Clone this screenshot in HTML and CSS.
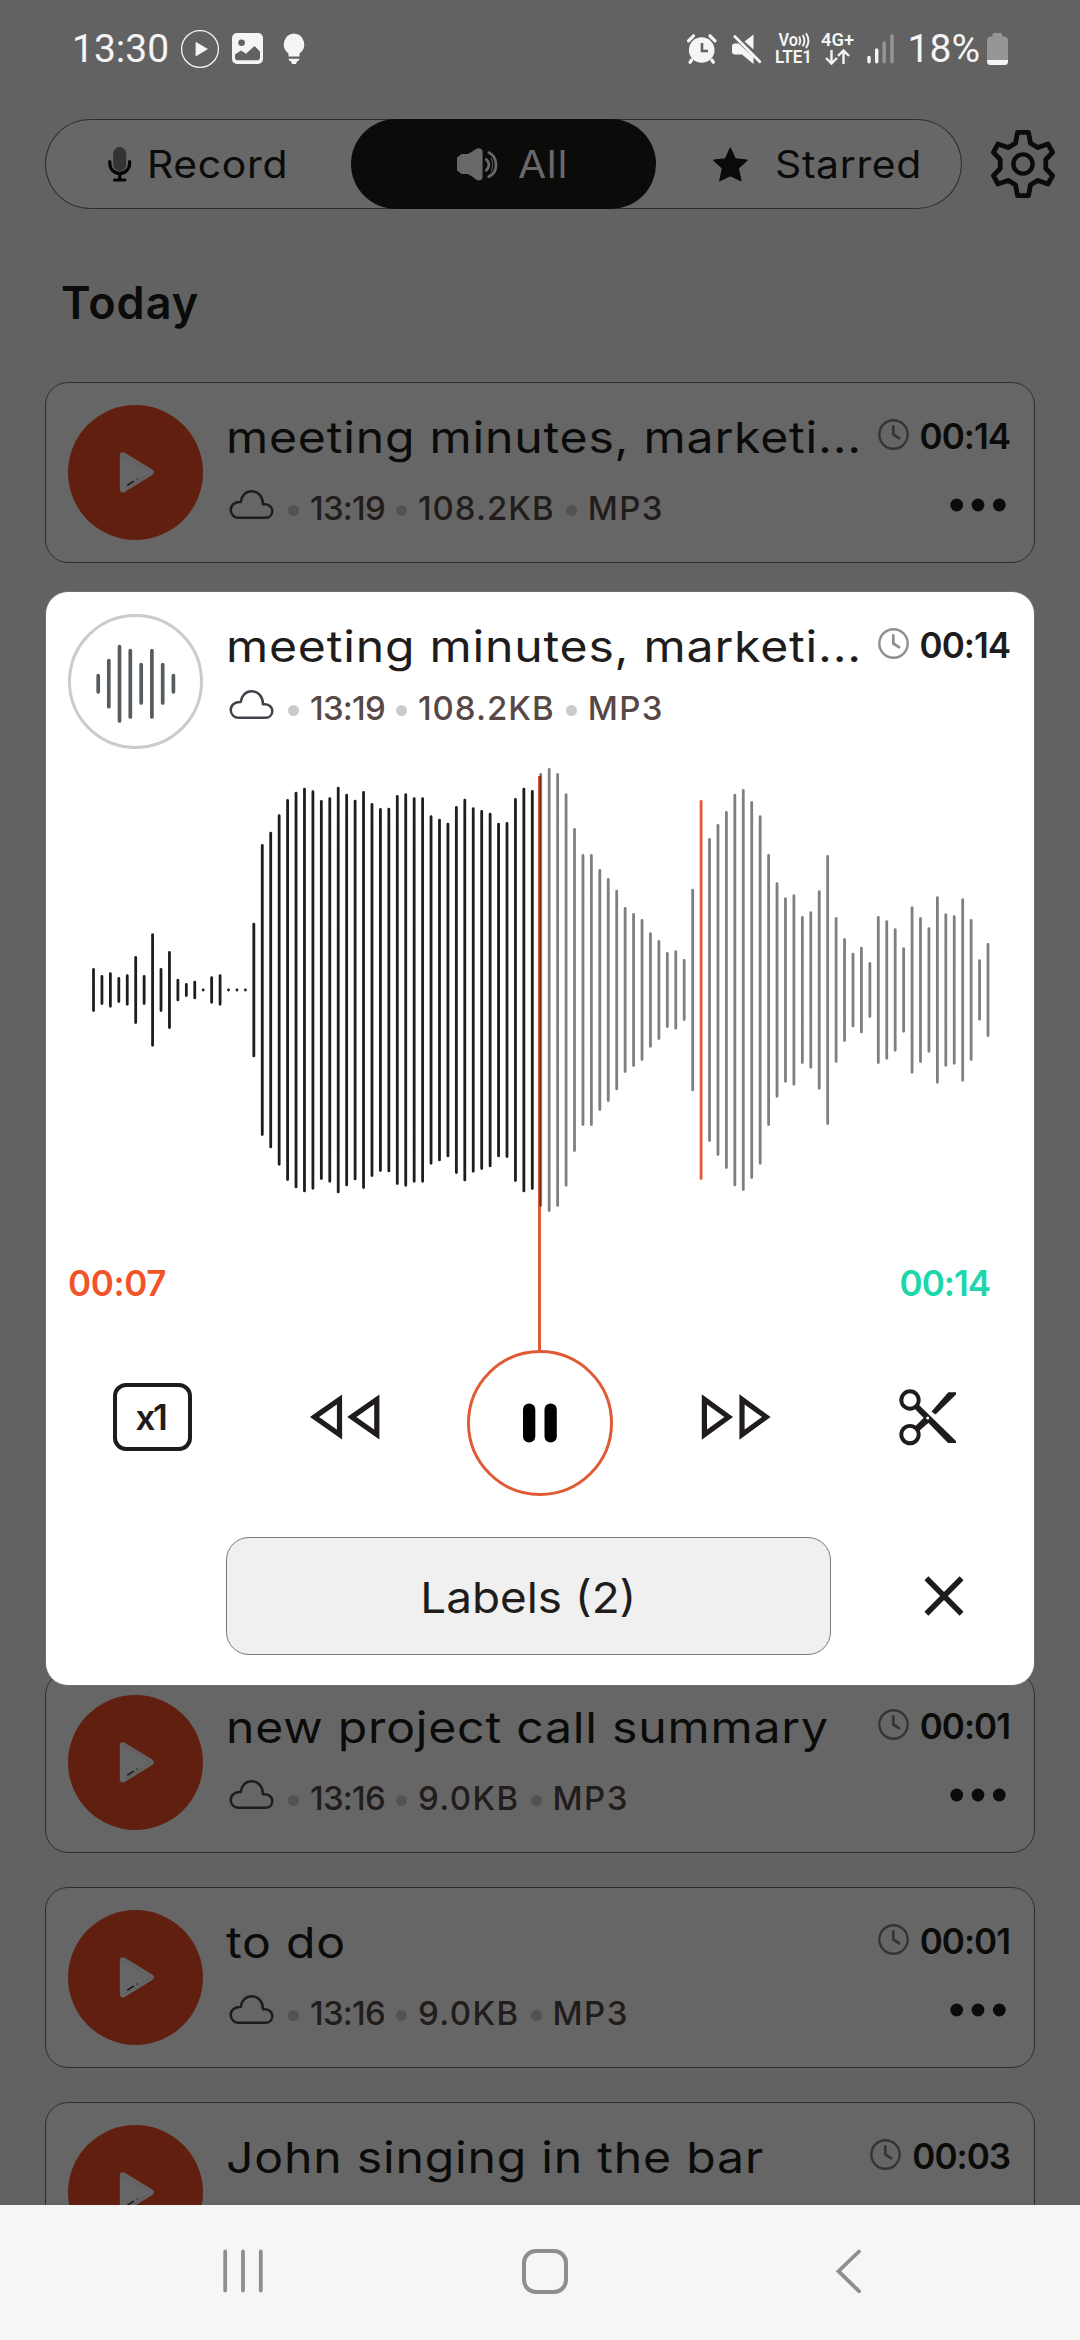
FILE: index.html
```html
<!DOCTYPE html>
<html lang="en">
<head>
<meta charset="utf-8">
<title>Recordings</title>
<link rel="stylesheet" href="styles.css">
</head>
<body>
<svg class="defs" width="0" height="0">
  <symbol id="cloud" viewBox="0 0 51 44">
    <path d="M12.6 31.8A7.9 7.9 0 0 1 4.7 24C4.7 19.2 9 15.6 14.7 16C15.6 9.5 20 5.2 25.4 5.2C32 5.2 37.2 10.6 36.9 18.3C42.2 17.4 46.3 20.6 46.3 25C46.3 29 43.4 31.8 39.5 31.8Z" fill="none" stroke="currentColor" stroke-width="2.5" stroke-linejoin="round"/>
  </symbol>
  <symbol id="clock" viewBox="0 0 31 31">
    <circle cx="15.5" cy="15.5" r="14.2" fill="none" stroke="currentColor" stroke-width="2.4"/>
    <path d="M15.3 7.5V15.5L21 19.2" fill="none" stroke="currentColor" stroke-width="2.8" stroke-linecap="round" stroke-linejoin="round"/>
  </symbol>
  <symbol id="play" viewBox="0 0 135 135">
    <path d="M55 50.5L82.5 67.3L55 84.2Z" fill="#666" stroke="#666" stroke-width="6.4" stroke-linejoin="round"/>
    <path d="M54.8 51.5Q55 50 56.8 51L81.5 66Q83.3 67.3 81.5 68.6L56.8 83.6" fill="none" stroke="#585858" stroke-width=".8"/>
    <path d="M59.3 80.2L65.8 76M68.6 74.3L69.4 73.8" fill="none" stroke="#080808" stroke-width="1.3"/>
  </symbol>
  <symbol id="more" viewBox="0 0 60 38">
    <circle cx="6.7" cy="19" r="6.4"/><circle cx="28" cy="19" r="6.4"/><circle cx="49.3" cy="19" r="6.4"/>
  </symbol>
</svg>

<div class="screen">
  <header class="status">
    <div class="status-left">
      <span class="status-text">13:30</span>
      <svg class="s-play" width="40" height="40"><circle cx="20" cy="20" r="18.4" fill="none" stroke="#f5f5f5" stroke-width="1.3"/><path d="M15.6 12.8L28 20L15.6 27.4Z" fill="#f5f5f5"/></svg>
      <svg class="s-pic" width="31" height="31"><rect width="31" height="31" rx="5" fill="#f5f5f5"/><circle cx="9.6" cy="9.8" r="3.3" fill="#626262"/><path d="M3 24.2V21.5L9 17.5L14 20.7L22.5 13L28 18.5V24.2Q28 27.3 25 27.3H6Q3 27.3 3 24.2Z" fill="#626262"/></svg>
      <svg class="s-bulb" width="24" height="32"><path d="M12 .5A11 11 0 0 1 17.5 20.5V23.5H6.5V20.5A11 11 0 0 1 12 .5ZM6.5 25.8H17.5L16.5 28H15.2L14 31H10L8.8 28H7.5Z" fill="#f5f5f5"/></svg>
    </div>
    <div class="status-right">
      <svg width="30" height="30"><circle cx="14.7" cy="16" r="12.8" fill="#f5f5f5"/><path d="M1.5 6.8L6.5 1.8M28 6.8L23 1.8M4.6 26L3 28.3M24.8 26L26.4 28.3" stroke="#f5f5f5" stroke-width="3.2" stroke-linecap="round"/><path d="M15 9V17H21" fill="none" stroke="#626262" stroke-width="2.6"/></svg>
      <svg class="s-mute" width="30" height="30"><path d="M0 12.5Q0 9.5 3 9.5H6.5L21.5 23V30L10 20.5H3Q0 20.5 0 17.5ZM21.5 .5V15.5L12.5 7.5Z" fill="#f5f5f5"/><path d="M2.8 2.5L27.8 27.8" stroke="#f5f5f5" stroke-width="2.8" stroke-linecap="round"/></svg>
      <svg class="s-volte" width="38" height="33"><text x="3.6" y="14.4" textLength="19.5" lengthAdjust="spacingAndGlyphs">Vo</text><path d="M24 4.5Q26.5 8.5 24 13M27.6 3Q31.2 8.5 27.6 14.3M31 1.2Q35.8 8.5 31 16" fill="none" stroke="#f5f5f5" stroke-width="1.9"/><text x="0" y="31.4" textLength="37" lengthAdjust="spacingAndGlyphs">LTE1</text></svg>
      <svg class="s-4g" width="34" height="33"><text x="0" y="13.8" textLength="33" lengthAdjust="spacingAndGlyphs">4G+</text><path d="M10.5 18V31M5 26L10.5 31.5L16 26M22.5 32V19M17 24L22.5 18.5L28 24" fill="none" stroke="#f5f5f5" stroke-width="2.4"/></svg>
      <svg class="s-signal" width="28" height="30"><path d="M2 23.5V27.7M9.7 16V27.7" stroke="#f5f5f5" stroke-width="3.4" stroke-linecap="round"/><path d="M17.2 9V27.7M25 2V27.7" stroke="#969696" stroke-width="3.4" stroke-linecap="round"/></svg>
      <span class="status-text s-pct">18%</span>
      <svg class="s-batt" width="21" height="32"><path d="M5.5 1.5Q5.5 0 7 0H13.5Q15 0 15 1.5V3.5H18Q21 4.5 21 7.5V27H0V7.5Q0 4.5 3 3.5H5.5Z" fill="#969696"/><path d="M0 27H21V28.5Q21 32 17.5 32H3.5Q0 32 0 28.5Z" fill="#f5f5f5"/></svg>
    </div>
  </header>

  <main class="content">
    <nav class="topbar">
      <div class="tabs">
        <div class="tab tab-record">
          <svg width="24" height="35"><rect x="5.2" y="0" width="13" height="24" rx="6.5" fill="#333"/><path d="M1.8 14.5V16.5A9.9 9.9 0 0 0 21.6 16.5V14.5M11.7 26.5V32" fill="none" stroke="#050505" stroke-width="3.2"  stroke-linecap="round"/><path d="M6.5 33H17" stroke="#050505" stroke-width="3" stroke-linecap="round"/></svg>
          <span>Record</span>
        </div>
        <div class="tab tab-all">
          <svg width="41" height="33"><path d="M4.5 6H10Q12 6 19 1C22-.5 25.6.5 25.6 4V29C25.6 32.5 22 33.4 19 31.5Q12 26 10 26H4.5L0 22.5V9.5Z" fill="#6a676b"/><path d="M29.3 11.4Q34.6 16.8 29.3 22.2M31.8 4.6C40.8 9 42 24 31.8 28.6" fill="none" stroke="#6a676b" stroke-width="2.8" stroke-linecap="round"/><path d="M34 10Q37.5 16.8 34 23.4" fill="none" stroke="#6a676b" stroke-width="1"/></svg>
          <span>All</span>
        </div>
        <div class="tab tab-starred">
          <svg width="35" height="35"><path d="M17.3 1L22.2 11.8L34 13.2L25.2 21.2L28 33.8L17.3 28.6L6.7 33.8L9.5 21.2L.8 13.2L12.5 11.8Z" fill="#0b0b0a" stroke="#0b0b0a" stroke-width="1.2" stroke-linejoin="round"/></svg>
          <span>Starred</span>
        </div>
      </div>
      <svg class="gear" width="64" height="68"><path d="M26.5 2.4H37.5L39.5 13.2L47 17.6L57 14L61.6 22.3L54.8 29.5V38.5L61.6 45.7L57 54L47 50.4L39.5 54.8L37.5 65.6H26.5L24.5 54.8L17 50.4L7 54L2.4 45.7L9.2 38.5V29.5L2.4 22.3L7 14L17 17.6L24.5 13.2Z" fill="none" stroke="#0b0b0a" stroke-width="4.8" stroke-linejoin="round"/><circle cx="32" cy="34" r="9.6" fill="none" stroke="#0b0b0a" stroke-width="4.4"/></svg>
    </nav>

    <h1 class="heading">Today</h1>

    <section class="list">
      <article class="card">
        <div class="disc"><svg width="135" height="135"><use href="#play"/></svg></div>
        <div class="info">
          <div class="row-title"><span class="title">meeting minutes, marketi...</span><span class="length"><svg width="31" height="31"><use href="#clock"/></svg>00:14</span></div>
          <div class="row-meta"><svg class="cloud" width="51" height="44"><use href="#cloud"/></svg><i></i><span class="at">13:19</span><i></i><span class="size-long">108.2KB</span><i></i><span>MP3</span><svg class="more" width="60" height="38"><use href="#more"/></svg></div>
        </div>
      </article>

      <article class="card player">
        <div class="player-head">
          <div class="disc ring"><svg width="129" height="129"><path d="M27.2 58.7V74.8M37.8 43.5V89.7M48.5 29.7V104M59.3 33.7V100M70.2 47.7V86M80.9 33.7V100M91.7 47.7V86M102.4 58.7V74.8" stroke="#555b5e" stroke-width="3.7" stroke-linecap="round"/></svg></div>
          <div class="info">
            <div class="row-title"><span class="title">meeting minutes, marketi...</span><span class="length"><svg width="31" height="31"><use href="#clock"/></svg>00:14</span></div>
            <div class="row-meta"><svg class="cloud" width="51" height="44"><use href="#cloud"/></svg><i></i><span class="at">13:19</span><i></i><span class="size-long">108.2KB</span><i></i><span>MP3</span></div>
          </div>
        </div>
        <div class="playhead"></div>
        <svg class="wave" id="wave" width="988" height="512" viewBox="46 749 988 512"></svg>
        <div class="times"><span class="now">00:07</span><span class="total">00:14</span></div>
        <div class="controls">
          <div class="speed">x1</div>
          <svg class="side" width="80" height="60"><path d="M8.5 30L33.5 12.4V47.6ZM45.8 30L70.8 12.4V47.6Z" fill="none" stroke="#211c1c" stroke-width="5.2"/></svg>
          <div class="pause"><svg width="40" height="40"><rect x="3" y=".5" width="12.3" height="39" rx="6.1"/><rect x="24.5" y=".5" width="12.3" height="39" rx="6.1"/></svg></div>
          <svg class="side" width="80" height="60"><path d="M10.4 12.4V47.6L34.6 30ZM48 12.4V47.6L72.2 30Z" fill="none" stroke="#211c1c" stroke-width="5.2"/></svg>
          <svg class="side" width="58" height="58"><circle cx="11" cy="12" r="8.7" fill="none" stroke="#211c1c" stroke-width="3.9"/><circle cx="11" cy="46.6" r="8.7" fill="none" stroke="#211c1c" stroke-width="3.9"/><path d="M15.5 20.5L19.5 16.5L57 53V55H49ZM15 39.5L25.5 29L31 33.5L19.5 43.5ZM32.5 23.5L49.3 4.3H57V6.5L36.5 26.5Z" fill="#211c1c"/><circle cx="28.7" cy="30" r="1.5" fill="#fff"/></svg>
        </div>
        <div class="actions">
          <div class="labels"><span>Labels (2)</span></div>
          <svg width="52" height="52"><path d="M8.4 8.3L43.6 43.7M43.6 8.3L8.4 43.7" stroke="#211c1c" stroke-width="5.6"/></svg>
        </div>
      </article>

      <article class="card after-player">
        <div class="disc"><svg width="135" height="135"><use href="#play"/></svg></div>
        <div class="info">
          <div class="row-title"><span class="title">new project call summary</span><span class="length"><svg width="31" height="31"><use href="#clock"/></svg>00:01</span></div>
          <div class="row-meta"><svg class="cloud" width="51" height="44"><use href="#cloud"/></svg><i></i><span class="at">13:16</span><i></i><span>9.0KB</span><i></i><span>MP3</span><svg class="more" width="60" height="38"><use href="#more"/></svg></div>
        </div>
      </article>

      <article class="card">
        <div class="disc"><svg width="135" height="135"><use href="#play"/></svg></div>
        <div class="info">
          <div class="row-title"><span class="title">to do</span><span class="length"><svg width="31" height="31"><use href="#clock"/></svg>00:01</span></div>
          <div class="row-meta"><svg class="cloud" width="51" height="44"><use href="#cloud"/></svg><i></i><span class="at">13:16</span><i></i><span>9.0KB</span><i></i><span>MP3</span><svg class="more" width="60" height="38"><use href="#more"/></svg></div>
        </div>
      </article>

      <article class="card">
        <div class="disc"><svg width="135" height="135"><use href="#play"/></svg></div>
        <div class="info">
          <div class="row-title"><span class="title">John singing in the bar</span><span class="length"><svg width="31" height="31"><use href="#clock"/></svg>00:03</span></div>
        </div>
      </article>
    </section>
  </main>

  <footer class="navbar">
    <svg width="60" height="60"><path d="M12.2 10.5V49.5M30 10.5V49.5M47.8 10.5V49.5" stroke="#8e8e8e" stroke-width="3.8" stroke-linecap="round"/></svg>
    <svg width="60" height="60"><rect x="9" y="10" width="42" height="41" rx="12" fill="none" stroke="#8e8e8e" stroke-width="4"/></svg>
    <svg width="60" height="60"><path d="M42 10.5L21.5 30.2L42 50.2" fill="none" stroke="#8e8e8e" stroke-width="3.8" stroke-linecap="round"/></svg>
  </footer>
</div>
<script src="wave.js"></script>
</body>
</html>
```
FILE: styles.css
```css
* { box-sizing: border-box; }
body { margin: 0; font-family: Inter, sans-serif; }
svg { display: block; flex: none; }
.defs { position: absolute; }

.screen {
  width: 1080px;
  height: 2340px;
  display: flex;
  flex-direction: column;
  background: #626262;
  color: #0b0b0a;
  overflow: hidden;
}

/* status bar */
.status {
  height: 97px;
  flex: none;
  display: flex;
  justify-content: space-between;
  align-items: center;
  padding: 0 72px;
}
.status svg { overflow: visible; }
.status-left, .status-right { display: flex; align-items: center; }
.status-text {
  font-family: Roboto, sans-serif;
  font-size: 39px;
  line-height: 46px;
  color: #f5f5f5;
}
.status text {
  font-family: Roboto, sans-serif;
  font-size: 18px;
  font-weight: 600;
  fill: #f5f5f5;
}
.s-play { margin-left: 11px; }
.s-pic { margin-left: 12px; }
.s-bulb { margin-left: 19px; }
.s-mute { margin-left: 15px; }
.s-volte { margin-left: 13px; }
.s-4g { margin-left: 8px; }
.s-signal { margin-left: 12px; }
.s-pct { margin-left: 13px; }
.s-batt { margin-left: 7px; }

.content {
  height: 2108px;
  flex: none;
  overflow: hidden;
  padding: 22px 25px 0 45px;
}

/* tabs */
.topbar { display: flex; align-items: center; }
.tabs {
  width: 917px;
  height: 90px;
  flex: none;
  display: grid;
  grid-template-columns: repeat(3, 1fr);
  border-radius: 45px;
  background: #676767;
  box-shadow: inset 0 0 0 1px #2f2d2d;
}
.tab {
  display: flex;
  align-items: center;
  border-radius: 45px;
  font-size: 37.5px;
  letter-spacing: .6px;
}
.tab span {
  padding-top: 2px;
  line-height: 46px;
  transform: scaleX(1.09);
  transform-origin: left;
}
.tab-record { padding-left: 63px; gap: 15px; }
.tab-all { padding-left: 106px; gap: 20px; background: #0b0b0a; color: #6b686c; }
.tab-starred { padding-left: 57px; gap: 27px; }
.gear { margin-left: 29px; }

.heading {
  margin: 66px 0 51px 16px;
  font-size: 45px;
  font-weight: 600;
  line-height: 56px;
  letter-spacing: 1px;
}

/* recordings */
.list { display: flex; flex-direction: column; gap: 34px; }
.card {
  width: 990px;
  height: 181px;
  flex: none;
  display: flex;
  gap: 23px;
  padding: 22px 24px 22px 22px;
  border: 1px solid #302d2d;
  border-radius: 23px;
  background: #666;
}
.disc {
  width: 135px;
  height: 135px;
  flex: none;
  border-radius: 50%;
  background: #611f10;
}
.info { flex: 1; min-width: 0; padding-top: 2px; }
.row-title { display: flex; justify-content: space-between; height: 60px; }
.title {
  font-size: 43px;
  line-height: 60px;
  letter-spacing: .7px;
  white-space: nowrap;
  transform: scaleX(1.12);
  transform-origin: left;
}
.length {
  display: flex;
  gap: 11px;
  padding-top: 7px;
  font-size: 35px;
  font-weight: 600;
  line-height: 44px;
  letter-spacing: -1px;
}
.length svg { margin-top: 5px; color: #353535; }
.row-meta {
  display: flex;
  align-items: center;
  gap: 11px;
  height: 44px;
  margin-top: 19px;
  font-size: 33px;
  font-weight: 450;
  line-height: 44px;
  letter-spacing: 1.4px;
  color: #221c1b;
}
.row-meta .cloud { color: #1b1d22; }
.row-meta .at { letter-spacing: -.8px; }
.row-meta .size-long { letter-spacing: 1px; }
.row-meta i {
  width: 11px;
  height: 11px;
  margin-top: 5px;
  border-radius: 50%;
  background: #525252;
}
.row-meta .more { margin-left: auto; align-self: flex-start; fill: #0b0b0a; }

/* expanded player */
.player {
  position: relative;
  z-index: 1;
  display: block;
  height: 1095px;
  margin-top: -6px;
  padding: 0;
  border-color: #756c6b;
  background: #fff;
  color: #211c1c;
}
.player-head { display: flex; gap: 23px; padding: 22px 24px 0 22px; }
.ring { border: 3px solid #cbcbcb; background: #fff; }
.player .length svg { color: #8f8f8f; }
.player .row-meta { margin-top: 10px; color: #574845; }
.player .cloud { color: #3f444c; }
.player .row-meta i { background: #cbcbcb; }
.wave { position: relative; }
.playhead {
  position: absolute;
  left: 492px;
  top: 184px;
  width: 3px;
  height: 575px;
  background: #e05a35;
}
.times {
  display: flex;
  justify-content: space-between;
  padding: 0 44px 0 22px;
  font-size: 35px;
  font-weight: 600;
  line-height: 44px;
}
.now { color: #f05529; letter-spacing: -.4px; }
.total { color: #1fd6ab; letter-spacing: -1px; }
.controls {
  display: grid;
  grid-template-columns: repeat(5, 194px);
  justify-content: center;
  justify-items: center;
  align-items: center;
  height: 146px;
  margin-top: 45px;
}
.side { margin-bottom: 12px; }
.speed {
  width: 79px;
  height: 68px;
  margin-bottom: 12px;
  padding-right: 3px;
  border: 4px solid #211c1c;
  border-radius: 13px;
  font-size: 35px;
  font-weight: 600;
  line-height: 60px;
  letter-spacing: -2.4px;
  text-align: center;
}
.pause {
  display: grid;
  place-items: center;
  width: 146px;
  height: 146px;
  border: 3px solid #e05a35;
  border-radius: 50%;
}
.actions {
  display: flex;
  align-items: center;
  gap: 87px;
  margin-top: 41px;
  padding-left: 180px;
}
.labels {
  display: flex;
  align-items: center;
  justify-content: center;
  width: 605px;
  height: 118px;
  border: 1px solid #7d7576;
  border-radius: 23px;
  background: #f0f0f0;
  font-size: 43px;
  line-height: 60px;
}
.labels span { padding-top: 2px; transform: scaleX(1.066); }
.after-player { margin-top: -48px; }

/* system navigation */
.navbar {
  height: 135px;
  flex: none;
  display: flex;
  gap: 242px;
  padding: 36px 0 0 213px;
  background: #f6f6f6;
}
```
FILE: wave.js
```js
// Half-height in pixels of every amplitude bar, left to right.
const levels = [
  22, 15, 17.7, 13, 15.7, 34, 15, 56.7, 22, 39, 11.3, 7, 9.3, 1.5, 13.7, 15.7, 1.5, 1.5, 1.5, 67.3,
  146, 158.3, 175.7, 191, 198.3, 202.3, 199.7, 190, 192.7, 203.3, 196.3, 190.3, 199, 187, 182, 182.3, 195,
  196.7, 192.7, 192.7, 174.7, 171.3, 167.3, 184, 191.3, 182.7, 180, 177.3, 167.3, 168, 192, 202.3, 200,
  217, 222, 217, 196.7, 162, 136, 136, 121, 112, 100.3, 83, 77, 71, 57.7, 50, 38, 39.7, 31, 101.3,
  190, 152, 166, 179, 196.3, 201, 189, 174.7, 136, 107.7, 92.7, 95.7, 74, 78.7, 99.7, 135, 73, 52,
  37.3, 43.3, 28, 74, 69.7, 61.7, 42.7, 83.7, 73, 62.7, 93.7, 76.7, 74.7, 91.7, 71, 30.7, 47
];
const playedCount = 53;
const labelIndex = 72;
const middle = 990;
const parts = { played: "", label: "", rest: "" };

levels.forEach((h, i) => {
  const x = (93.5 + i * 8.4387).toFixed(2);
  const half = Math.max(h - 1.4, 0.01);
  const key = i < playedCount ? "played" : i === labelIndex ? "label" : "rest";
  parts[key] += `M${x} ${middle - half}V${middle + half}`;
});

const style = {
  played: 'stroke="#211c1c"',
  label: 'stroke="#e35a36"',
  rest: 'stroke="#000" stroke-opacity=".5"'
};
document.getElementById("wave").innerHTML = Object.keys(parts)
  .map(k => `<path d="${parts[k]}" fill="none" stroke-width="2.8" stroke-linecap="round" ${style[k]}/>`)
  .join("");
```
